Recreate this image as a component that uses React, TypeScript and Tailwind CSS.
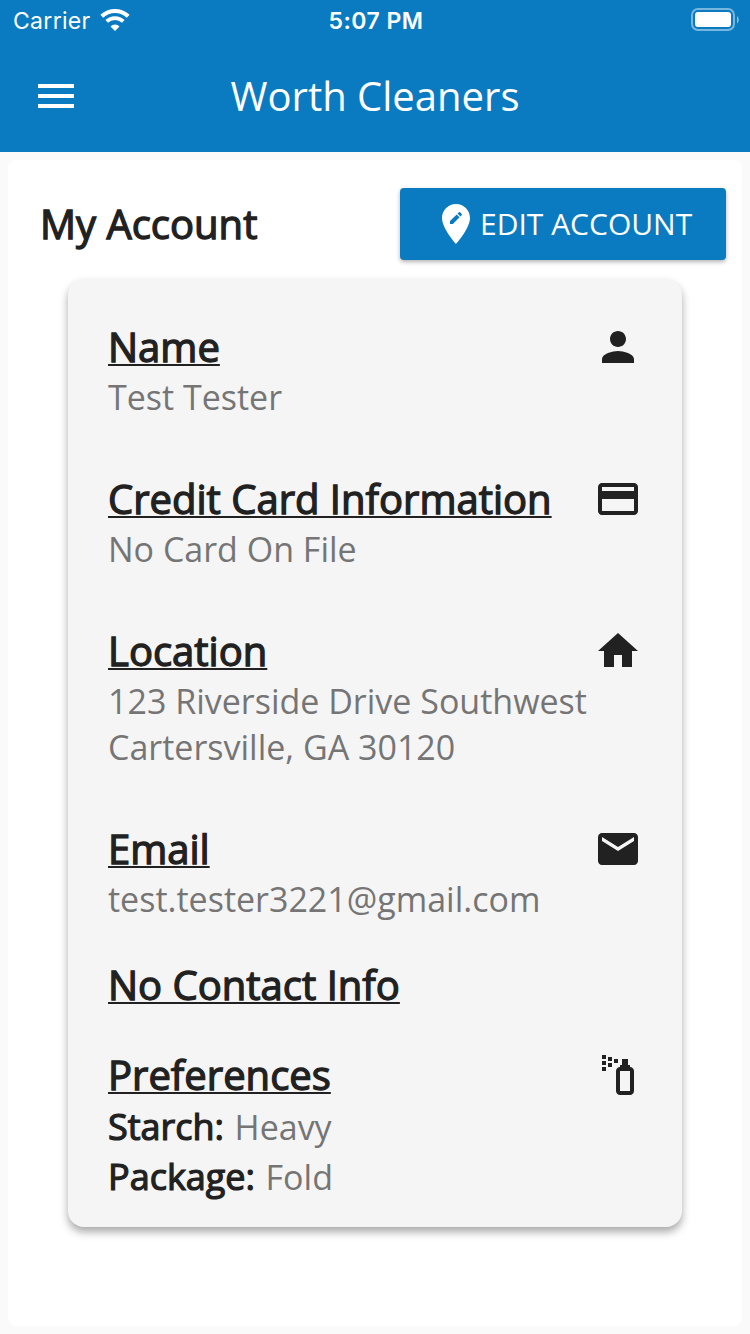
import type { ReactNode } from "react";

const ICONS = {
  menu: "M3 18h18v-2H3v2zm0-5h18v-2H3v2zm0-7v2h18V6H3z",
  editLocation:
    "M12 2C8.14 2 5 5.14 5 9c0 5.25 7 13 7 13s7-7.75 7-13c0-3.86-3.14-7-7-7zm-1.56 10H9v-1.44l3.35-3.34 1.43 1.43L10.44 12zm4.45-4.45l-.7.7-1.44-1.44.7-.7c.15-.15.39-.15.54 0l.9.9c.15.15.15.39 0 .54z",
  person:
    "M12 12c2.21 0 4-1.79 4-4s-1.79-4-4-4-4 1.79-4 4 1.79 4 4 4zm0 2c-2.67 0-8 1.34-8 4v2h16v-2c0-2.66-5.33-4-8-4z",
  card: "M20 4H4c-1.11 0-1.99.89-1.99 2L2 18c0 1.11.89 2 2 2h16c1.11 0 2-.89 2-2V6c0-1.11-.89-2-2-2zm0 14H4v-6h16v6zm0-10H4V6h16v2z",
  home: "M10 20v-6h4v6h5v-8h3L12 3 2 12h3v8z",
  email:
    "M20 4H4c-1.1 0-1.99.9-1.99 2L2 18c0 1.1.9 2 2 2h16c1.1 0 2-.9 2-2V6c0-1.1-.9-2-2-2zm0 4l-8 5-8-5V6l8 5 8-5v2z",
  spray:
    "M10 4h2v2h-2V4M7 3h2v2H7V3m0 3h2v2H7V6M4 8h2v2H4V8m0-3h2v2H4V5m0-3h2v2H4V2m7 8c0-1.1.9-2 2-2V7h1V4h3v3h1v1c1.1 0 2 .9 2 2v10c0 1.1-.9 2-2 2h-5c-1.1 0-2-.9-2-2V10m2 0v10h5V10h-5z",
};

function Icon({ name }: { name: keyof typeof ICONS }) {
  return (
    <svg viewBox="0 0 24 24" className="size-12 shrink-0 fill-current">
      <path d={ICONS[name]} />
    </svg>
  );
}

function Section({
  title,
  icon,
  children,
}: {
  title: string;
  icon?: keyof typeof ICONS;
  children?: ReactNode;
}) {
  return (
    <section>
      <div className="flex h-[54px] items-center justify-between">
        <h2 className="text-[40px] leading-[54px] whitespace-nowrap underline decoration-2 underline-offset-2 [text-decoration-skip-ink:none] [-webkit-text-stroke:1.3px_#212121]">
          {title}
        </h2>
        {icon && <Icon name={icon} />}
      </div>
      {children}
    </section>
  );
}

function Line({ children }: { children: ReactNode }) {
  return <p className="text-[34px] leading-[46px] whitespace-nowrap text-[#757575]">{children}</p>;
}

function Preference({ label, value }: { label: string; value: string }) {
  return (
    <p className="flex h-[50px] items-baseline gap-[10.5px] leading-[50px] whitespace-nowrap">
      <span className="text-[36px] [-webkit-text-stroke:1.2px_#212121]">{label}</span>
      <span className="text-[34px] text-[#757575]">{value}</span>
    </p>
  );
}

function StatusBar() {
  return (
    <div className="grid h-10 grid-cols-3 items-center pr-[11px] pl-[13px] font-['Inter',sans-serif] text-[23px] leading-[38px]">
      <div className="flex items-center gap-[9px]">
        <span className="pt-0.5 tracking-[0.3px]">Carrier</span>
        <svg viewBox="0 0 30 22" className="h-[22px] w-[30px]" fill="none" stroke="white">
          <path d="M1.8 7.3a19 19 0 0 1 26.4 0" strokeWidth="4" />
          <path d="M6.7 12.4a12 12 0 0 1 16.6 0" strokeWidth="3.7" />
          <path d="M10.5 17.4a6.4 6.4 0 0 1 9 0L15 22z" fill="white" stroke="none" />
        </svg>
      </div>
      <span className="pt-0.5 text-center font-semibold tracking-[0.5px] whitespace-nowrap">5:07 PM</span>
      <svg viewBox="0 0 48 24" className="h-6 w-12 justify-self-end">
        <rect x="1" y="1" width="42" height="21" rx="6" fill="none" stroke="white" strokeOpacity=".45" strokeWidth="2" />
        <rect x="4" y="4" width="36" height="15" rx="3" fill="white" />
        <path d="M46 8c2.3 1.5 2.3 6 0 7.500z" fill="white" fillOpacity=".5" />
      </svg>
    </div>
  );
}

export default function App() {
  return (
    <div className="flex h-[1334px] w-[750px] flex-col bg-[#fafafa] font-['Open_Sans',sans-serif] text-[#212121]">
      <header className="h-[152px] bg-[#0b7bc1] text-white">
        <StatusBar />
        <div className="grid h-28 grid-cols-[48px_1fr_48px] items-center px-8">
          <button aria-label="Menu">
            <Icon name="menu" />
          </button>
          <h1 className="text-center text-[40px] leading-[54px]">Worth Cleaners</h1>
        </div>
      </header>
      <main className="m-2 flex-1 rounded-lg bg-white pt-7">
        <div className="flex h-[72px] items-center justify-between pr-4 pl-8">
          <h2 className="text-[40px] leading-[54px] [-webkit-text-stroke:1.3px_#212121]">My Account</h2>
          <button className="flex h-[72px] w-[326px] items-center rounded-[4px] bg-[#0b7bc1] pl-8 text-[30px] whitespace-nowrap text-white shadow-[0_2px_4px_rgba(0,0,0,0.3)]">
            <Icon name="editLocation" />
            <span className="leading-[48px]">EDIT ACCOUNT</span>
          </button>
        </div>
        <div className="mx-[60px] mt-[19px] flex h-[948px] flex-col gap-[52px] rounded-[16px] bg-[#f5f5f5] px-10 pt-[41px] shadow-[0_5px_8px_rgba(0,0,0,0.34)]">
          <Section title="Name" icon="person">
            <Line>Test Tester</Line>
          </Section>
          <Section title="Credit Card Information" icon="card">
            <Line>No Card On File</Line>
          </Section>
          <Section title="Location" icon="home">
            <Line>123 Riverside Drive Southwest</Line>
            <Line>Cartersville, GA 30120</Line>
          </Section>
          <div className="flex flex-col gap-9">
            <Section title="Email" icon="email">
              <Line>test.tester3221@gmail.com</Line>
            </Section>
            <Section title="No Contact Info" />
            <Section title="Preferences" icon="spray">
              <Preference label="Starch:" value="Heavy" />
              <Preference label="Package:" value="Fold" />
            </Section>
          </div>
        </div>
      </main>
    </div>
  );
}
